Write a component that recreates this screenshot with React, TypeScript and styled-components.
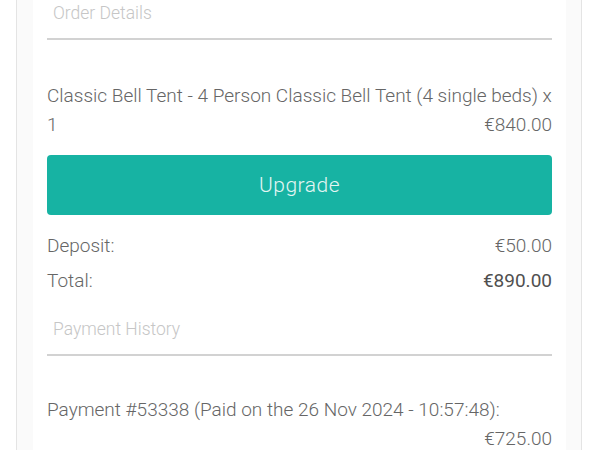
import React from "react";
import styled, { createGlobalStyle } from "styled-components";

const Global = createGlobalStyle`
  html, body { margin: 0; padding: 0; background: #ffffff; }
  body { font-family: Roboto, "Noto Sans", "Liberation Sans", sans-serif; }
`;

const Frame = styled.div`
  margin: 0 18px 0 16px;
  border-left: 1px solid #e4e4e4;
  border-right: 1px solid #e4e4e4;
  background: #fafafa;
  padding: 0 15px 0 16px;
  min-height: 450px;
`;

const Panel = styled.div`
  background: #ffffff;
  padding: 3px 14px 0 14px;
  min-height: 447px;
`;

const SectionTitle = styled.h2<{ $top?: number }>`
  margin: ${(p) => p.$top ?? 0}px 0 0 0;
  padding: 0 0 15px 6px;
  font-size: 17.5px;
  line-height: 20px;
  font-weight: 300;
  color: #c6c6c6;
  border-bottom: 2px solid #d2d2d2;
`;

const Item = styled.div<{ $top: number }>`
  margin-top: ${(p) => p.$top}px;
  font-size: 19px;
  line-height: 29px;
  font-weight: 300;
  color: #666666;
  &::after { content: ""; display: block; clear: both; }
`;

const Price = styled.span`
  float: right;
`;

const Button = styled.button`
  display: block;
  width: 100%;
  height: 60px;
  margin-top: 16px;
  border: none;
  border-radius: 4px;
  background: #17b3a3;
  color: #e4f6f3;
  font-family: inherit;
  font-size: 21px;
  font-weight: 300;
  letter-spacing: 0.5px;
`;

const Summary = styled.div`
  margin-top: 13px;
  display: flex;
  flex-direction: column;
`;

const Row = styled.div<{ $strong?: boolean }>`
  display: flex;
  justify-content: space-between;
  font-size: 19px;
  line-height: 35px;
  font-weight: 300;
  color: #666666;
  & > span:last-child {
    color: ${(p) => (p.$strong ? "#505050" : "#666666")};
    font-weight: ${(p) => (p.$strong ? 400 : 300)};
  }
`;

export default function App() {
  return (
    <>
      <Global />
      <Frame>
        <Panel>
          <SectionTitle>Order Details</SectionTitle>
          <Item $top={41}>
            Classic Bell Tent - 4 Person Classic Bell Tent (4 single beds) x 1
            <Price>€840.00</Price>
          </Item>
          <Button>Upgrade</Button>
          <Summary>
            <Row>
              <span>Deposit:</span>
              <span>€50.00</span>
            </Row>
            <Row $strong>
              <span>Total:</span>
              <span>€890.00</span>
            </Row>
          </Summary>
          <SectionTitle $top={21}>Payment History</SectionTitle>
          <Item $top={39}>
            Payment #53338 (Paid on the 26 Nov 2024 - 10:57:48):
            <Price>€725.00</Price>
          </Item>
        </Panel>
      </Frame>
    </>
  );
}
